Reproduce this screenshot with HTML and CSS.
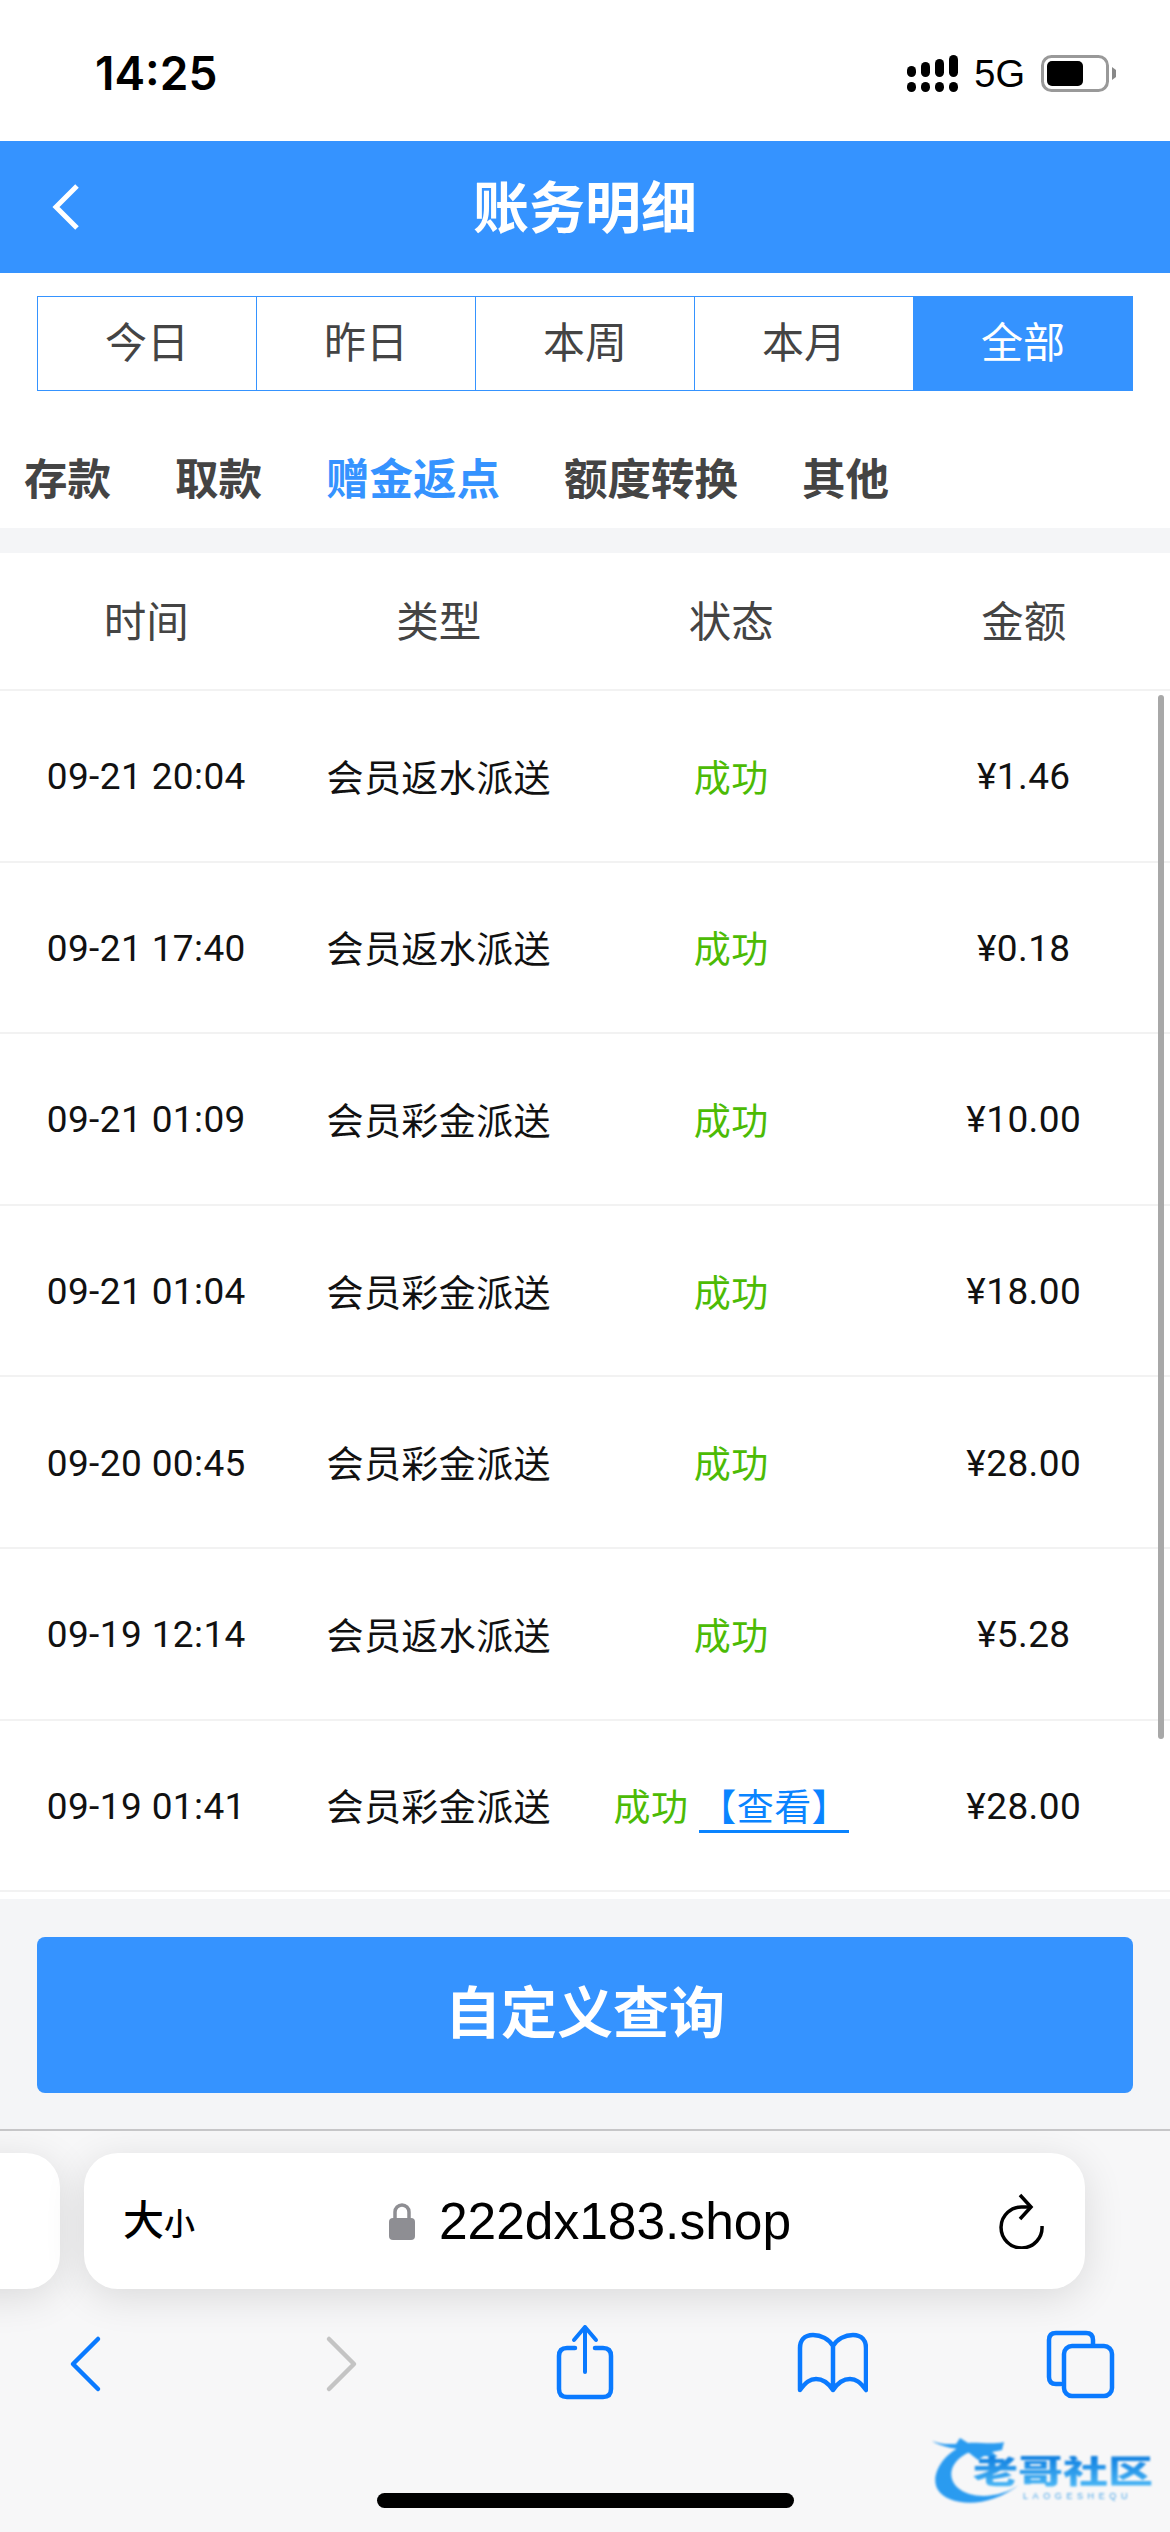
FILE: index.html
```html
<!DOCTYPE html>
<html>
<head>
    <title>账务明细</title>
    <link rel="stylesheet" href="styles.css">
</head>
<body>
    <div class="status-bar">
        <span class="clock">14:25</span>
        <div class="status-right">
            <svg class="signal" width="52" height="38" viewBox="0 0 52 38">
                <rect x="1" y="11" width="9" height="11" rx="4.5"/>
                <rect x="15" y="7" width="9" height="15" rx="4.5"/>
                <rect x="29" y="4" width="9" height="18" rx="4.5"/>
                <rect x="43" y="0" width="9" height="22" rx="4.5"/>
                <rect x="1" y="27" width="9" height="10" rx="4.5"/>
                <rect x="15" y="27" width="9" height="10" rx="4.5"/>
                <rect x="29" y="27" width="9" height="10" rx="4.5"/>
                <rect x="43" y="27" width="9" height="10" rx="4.5"/>
            </svg>
            <span class="net">5G</span>
            <svg class="battery" width="76" height="38" viewBox="0 0 76 38">
                <rect x="1.5" y="1.5" width="65" height="34" rx="9" fill="none" stroke="#999" stroke-width="3"/>
                <rect x="6" y="6" width="36" height="25" rx="5"/>
                <path d="M71 12 L75 15 V22 L71 25 Z" fill="#888"/>
            </svg>
        </div>
    </div>

    <div class="header">
        <svg class="header-back" width="30" height="48" viewBox="0 0 30 48">
            <path d="M26 3 L5 24 L26 45" fill="none" stroke="#fff" stroke-width="5"/>
        </svg>
        <h1>账务明细</h1>
    </div>

    <div class="filters">
        <div class="range-tabs">
            <div class="range-tab">今日</div>
            <div class="range-tab">昨日</div>
            <div class="range-tab">本周</div>
            <div class="range-tab">本月</div>
            <div class="range-tab active">全部</div>
        </div>

        <div class="type-tabs">
            <span>存款</span>
            <span>取款</span>
            <span class="active">赠金返点</span>
            <span>额度转换</span>
            <span>其他</span>
        </div>
    </div>

    <div class="list">
        <div class="list-head">
            <div>时间</div>
            <div>类型</div>
            <div>状态</div>
            <div>金额</div>
        </div>
        <div class="list-row">
            <div class="num">09-21 20:04</div>
            <div>会员返水派送</div>
            <div class="ok">成功</div>
            <div class="num">¥1.46</div>
        </div>
        <div class="list-row">
            <div class="num">09-21 17:40</div>
            <div>会员返水派送</div>
            <div class="ok">成功</div>
            <div class="num">¥0.18</div>
        </div>
        <div class="list-row">
            <div class="num">09-21 01:09</div>
            <div>会员彩金派送</div>
            <div class="ok">成功</div>
            <div class="num">¥10.00</div>
        </div>
        <div class="list-row">
            <div class="num">09-21 01:04</div>
            <div>会员彩金派送</div>
            <div class="ok">成功</div>
            <div class="num">¥18.00</div>
        </div>
        <div class="list-row">
            <div class="num">09-20 00:45</div>
            <div>会员彩金派送</div>
            <div class="ok">成功</div>
            <div class="num">¥28.00</div>
        </div>
        <div class="list-row">
            <div class="num">09-19 12:14</div>
            <div>会员返水派送</div>
            <div class="ok">成功</div>
            <div class="num">¥5.28</div>
        </div>
        <div class="list-row">
            <div class="num">09-19 01:41</div>
            <div>会员彩金派送</div>
            <div class="ok">成功<a class="view">【查看】</a></div>
            <div class="num">¥28.00</div>
        </div>
        <div class="scrollbar"></div>
    </div>

    <div class="query">
        <div class="query-btn">自定义查询</div>
    </div>

    <div class="browser">
        <div class="url-row">
            <div class="url-prev"></div>
            <div class="url-bar">
                <span class="aa">大<small>小</small></span>
                <div class="url-mid">
                    <svg class="lock" width="28" height="38" viewBox="0 0 28 38">
                        <path d="M7 18 V10 a7 7 0 0 1 14 0 V18" fill="none" stroke="#8e8e93" stroke-width="3.5"/>
                        <rect x="1" y="16" width="26" height="22" rx="4" fill="#8e8e93"/>
                    </svg>
                    <span class="url-text">222dx183.shop</span>
                </div>
                <svg class="reload" width="48" height="56" viewBox="0 0 48 56">
                    <path d="M44 33 A20.5 20.5 0 1 1 25 14 H32" fill="none" stroke="#000" stroke-width="3.5"/>
                    <path d="M22 2 L33 14 L22 26" fill="none" stroke="#000" stroke-width="3.5"/>
                </svg>
            </div>
        </div>
        <div class="nav">
            <svg width="72" height="80" viewBox="0 0 72 80">
                <path class="ico" d="M48 17 L23 42 L48 67"/>
            </svg>
            <svg width="72" height="80" viewBox="0 0 72 80">
                <path class="ico off" d="M30 17 L55 42 L30 67"/>
            </svg>
            <svg width="72" height="80" viewBox="0 0 72 80">
                <path class="ico" d="M28 26 H20 Q12 26 12 34 V67 Q12 75 20 75 H56 Q64 75 64 67 V34 Q64 26 56 26 H48"/>
                <path class="ico thin" d="M38 50 V5 M27 18 L38 5 L49 18"/>
            </svg>
            <svg width="72" height="80" viewBox="0 0 72 80">
                <path class="ico" d="M37 24 V68 M37 24 C33 17 25 13 17 13 C8 13 4 19 4 26 V68 C10 60 14 57 20 57 C27 57 33 62 37 68 C41 62 47 57 54 57 C60 57 64 60 70 68 V26 C70 19 66 13 57 13 C49 13 41 17 37 24 Z"/>
            </svg>
            <svg width="72" height="80" viewBox="0 0 72 80">
                <path class="ico" d="M17 62 H12 Q5 62 5 55 V18 Q5 11 12 11 H42 Q49 11 49 18 V23"/>
                <rect class="ico" x="20" y="24" width="48" height="50" rx="8"/>
            </svg>
        </div>
        <div class="home-bar"></div>
        <div class="watermark">
            <svg class="dragon" width="110" height="76" viewBox="0 0 110 76">
                <path d="M30 14 C8 24 -2 46 6 58 C16 74 56 78 88 52 C70 66 40 68 26 56 C14 46 18 28 38 20 Z" fill="#2a9bf0"/>
                <path d="M0 9 C10 13 18 12 24 12 L28 6 L36 11 C46 10 60 13 72 10 L70 18 L60 20 L66 25 L52 24 L46 28 L36 20 C26 16 10 16 0 9 Z" fill="#2a9bf0"/>
            </svg>
            <span class="wm-name">老哥社区</span>
            <span class="wm-sub">LAOGESHEQU</span>
        </div>
    </div>
</body>
</html>
```

FILE: styles.css
```css
* {
    box-sizing: border-box;
}

html, body {
    margin: 0;
    height: 2532px;
    overflow: hidden;
}

body {
    display: flex;
    flex-direction: column;
    background: #f4f5f7;
    font-family: "Roboto", "Noto Sans CJK SC", sans-serif;
    color: #333;
}

.status-bar {
    height: 141px;
    flex: none;
    background: #fff;
    display: flex;
    justify-content: space-between;
    align-items: center;
    padding: 0 53px 0 95px;
    color: #000;
}

.clock {
    font-family: "Inter", sans-serif;
    font-size: 46px;
    font-weight: 600;
    line-height: 1;
    margin-top: 5px;
}

.status-right {
    display: flex;
    align-items: center;
    margin-top: 7px;
}

.signal {
    margin-right: 16px;
}

.net {
    font-family: "Liberation Sans", sans-serif;
    font-size: 38px;
    line-height: 1;
    margin-right: 16px;
}

.header {
    height: 132px;
    flex: none;
    background: #3593ff;
    display: flex;
    align-items: center;
    justify-content: center;
    position: relative;
}

.header h1 {
    margin: 0;
    padding-bottom: 8px;
    font-size: 56px;
    font-weight: 700;
    color: #fff;
}

.header-back {
    position: absolute;
    left: 51px;
    top: 42px;
}

.filters {
    flex: none;
    background: #fff;
    padding-top: 23px;
}

.range-tabs {
    display: flex;
    height: 95px;
    margin: 0 37px;
}

.range-tab {
    flex: 1;
    display: flex;
    align-items: center;
    justify-content: center;
    padding-bottom: 8px;
    font-size: 42px;
    color: #444;
    border: 1px solid #3593ff;
    border-left-width: 0;
}

.range-tab:first-child {
    border-left-width: 1px;
}

.range-tab.active {
    background: #3593ff;
    color: #fff;
}

.type-tabs {
    height: 137px;
    display: flex;
    align-items: center;
    gap: 64px;
    padding: 33px 0 0 24px;
    font-size: 43.5px;
    font-weight: 700;
    color: #444;
}

.type-tabs .active {
    color: #3593ff;
}

.list {
    margin-top: 25px;
    flex: none;
    background: #fff;
    position: relative;
    padding-bottom: 7px;
}

.list-head, .list-row {
    display: grid;
    grid-template-columns: repeat(4, 1fr);
    align-items: center;
    text-align: center;
    border-bottom: 2px solid #f2f2f2;
}

.list-head {
    height: 138px;
    padding-bottom: 6px;
    font-size: 42.5px;
    color: #444;
}

.list-row {
    height: 171.6px;
    font-size: 37px;
    letter-spacing: 0.4px;
    color: #111;
}

.num {
    padding-top: 2px;
}

.ok {
    color: #4cbb05;
}

.view {
    color: #0a84ff;
    margin-left: 11px;
    border-bottom: 3px solid #0a84ff;
}

.scrollbar {
    position: absolute;
    right: 6px;
    top: 142px;
    width: 6px;
    height: 1044px;
    background: #a8a8a8;
    border-radius: 3px;
}

.query {
    flex: none;
    padding: 38px 37px 36px;
}

.query-btn {
    height: 156px;
    padding-bottom: 14px;
    background: #3593ff;
    border-radius: 8px;
    display: flex;
    align-items: center;
    justify-content: center;
    color: #fff;
    font-size: 56px;
    font-weight: 700;
}

.browser {
    flex: 1;
    position: relative;
    background: #f7f7f8;
    border-top: 2px solid #c6c6c8;
    overflow: hidden;
}

.url-row {
    display: flex;
    gap: 24px;
    margin: 22px 0 0 -140px;
}

.url-prev, .url-bar {
    height: 136px;
    background: #fff;
    border-radius: 34px;
    box-shadow: 0 8px 40px rgba(0, 0, 0, 0.12);
    flex: none;
}

.url-prev {
    width: 200px;
}

.url-bar {
    width: 1001px;
    display: flex;
    align-items: center;
    padding: 0 39px 0 39px;
    color: #000;
}

.aa {
    font-size: 41px;
    font-weight: 500;
    line-height: 1;
    width: 84px;
}

.aa small {
    font-size: 31px;
}

.url-mid {
    flex: 1;
    display: flex;
    align-items: center;
    justify-content: center;
    gap: 23px;
    margin-right: 26px;
}

.url-text {
    font-family: "Liberation Sans", sans-serif;
    font-size: 51.5px;
    line-height: 1;
    padding-top: 2px;
}

.nav {
    display: flex;
    justify-content: space-between;
    padding: 0 54px 0 50px;
    margin-top: 33px;
}

.ico {
    fill: none;
    stroke: #0a7aff;
    stroke-width: 4.5;
    stroke-linecap: round;
    stroke-linejoin: round;
}

.ico.off {
    stroke: #c4c4c4;
}

.ico.thin {
    stroke-width: 4;
}

.home-bar {
    position: absolute;
    left: 377px;
    top: 362px;
    width: 417px;
    height: 15px;
    background: #000;
    border-radius: 8px;
}

.watermark {
    position: absolute;
    left: 932px;
    top: 301px;
    width: 222px;
    height: 76px;
    filter: blur(0.9px);
}

.dragon {
    position: absolute;
    left: 0;
    top: 0;
}

.wm-name {
    position: absolute;
    left: 41px;
    top: 24px;
    font-size: 45px;
    line-height: 1;
    font-weight: 900;
    white-space: nowrap;
    transform: scaleY(0.72);
    transform-origin: top left;
    background: linear-gradient(#0f7fe0, #4db9f6);
    -webkit-background-clip: text;
    background-clip: text;
    color: transparent;
}

.wm-sub {
    position: absolute;
    left: 91px;
    top: 60px;
    font-family: "Liberation Sans", sans-serif;
    font-size: 9px;
    letter-spacing: 4.6px;
    line-height: 1;
    white-space: nowrap;
    color: #4aa5e8;
}
```
